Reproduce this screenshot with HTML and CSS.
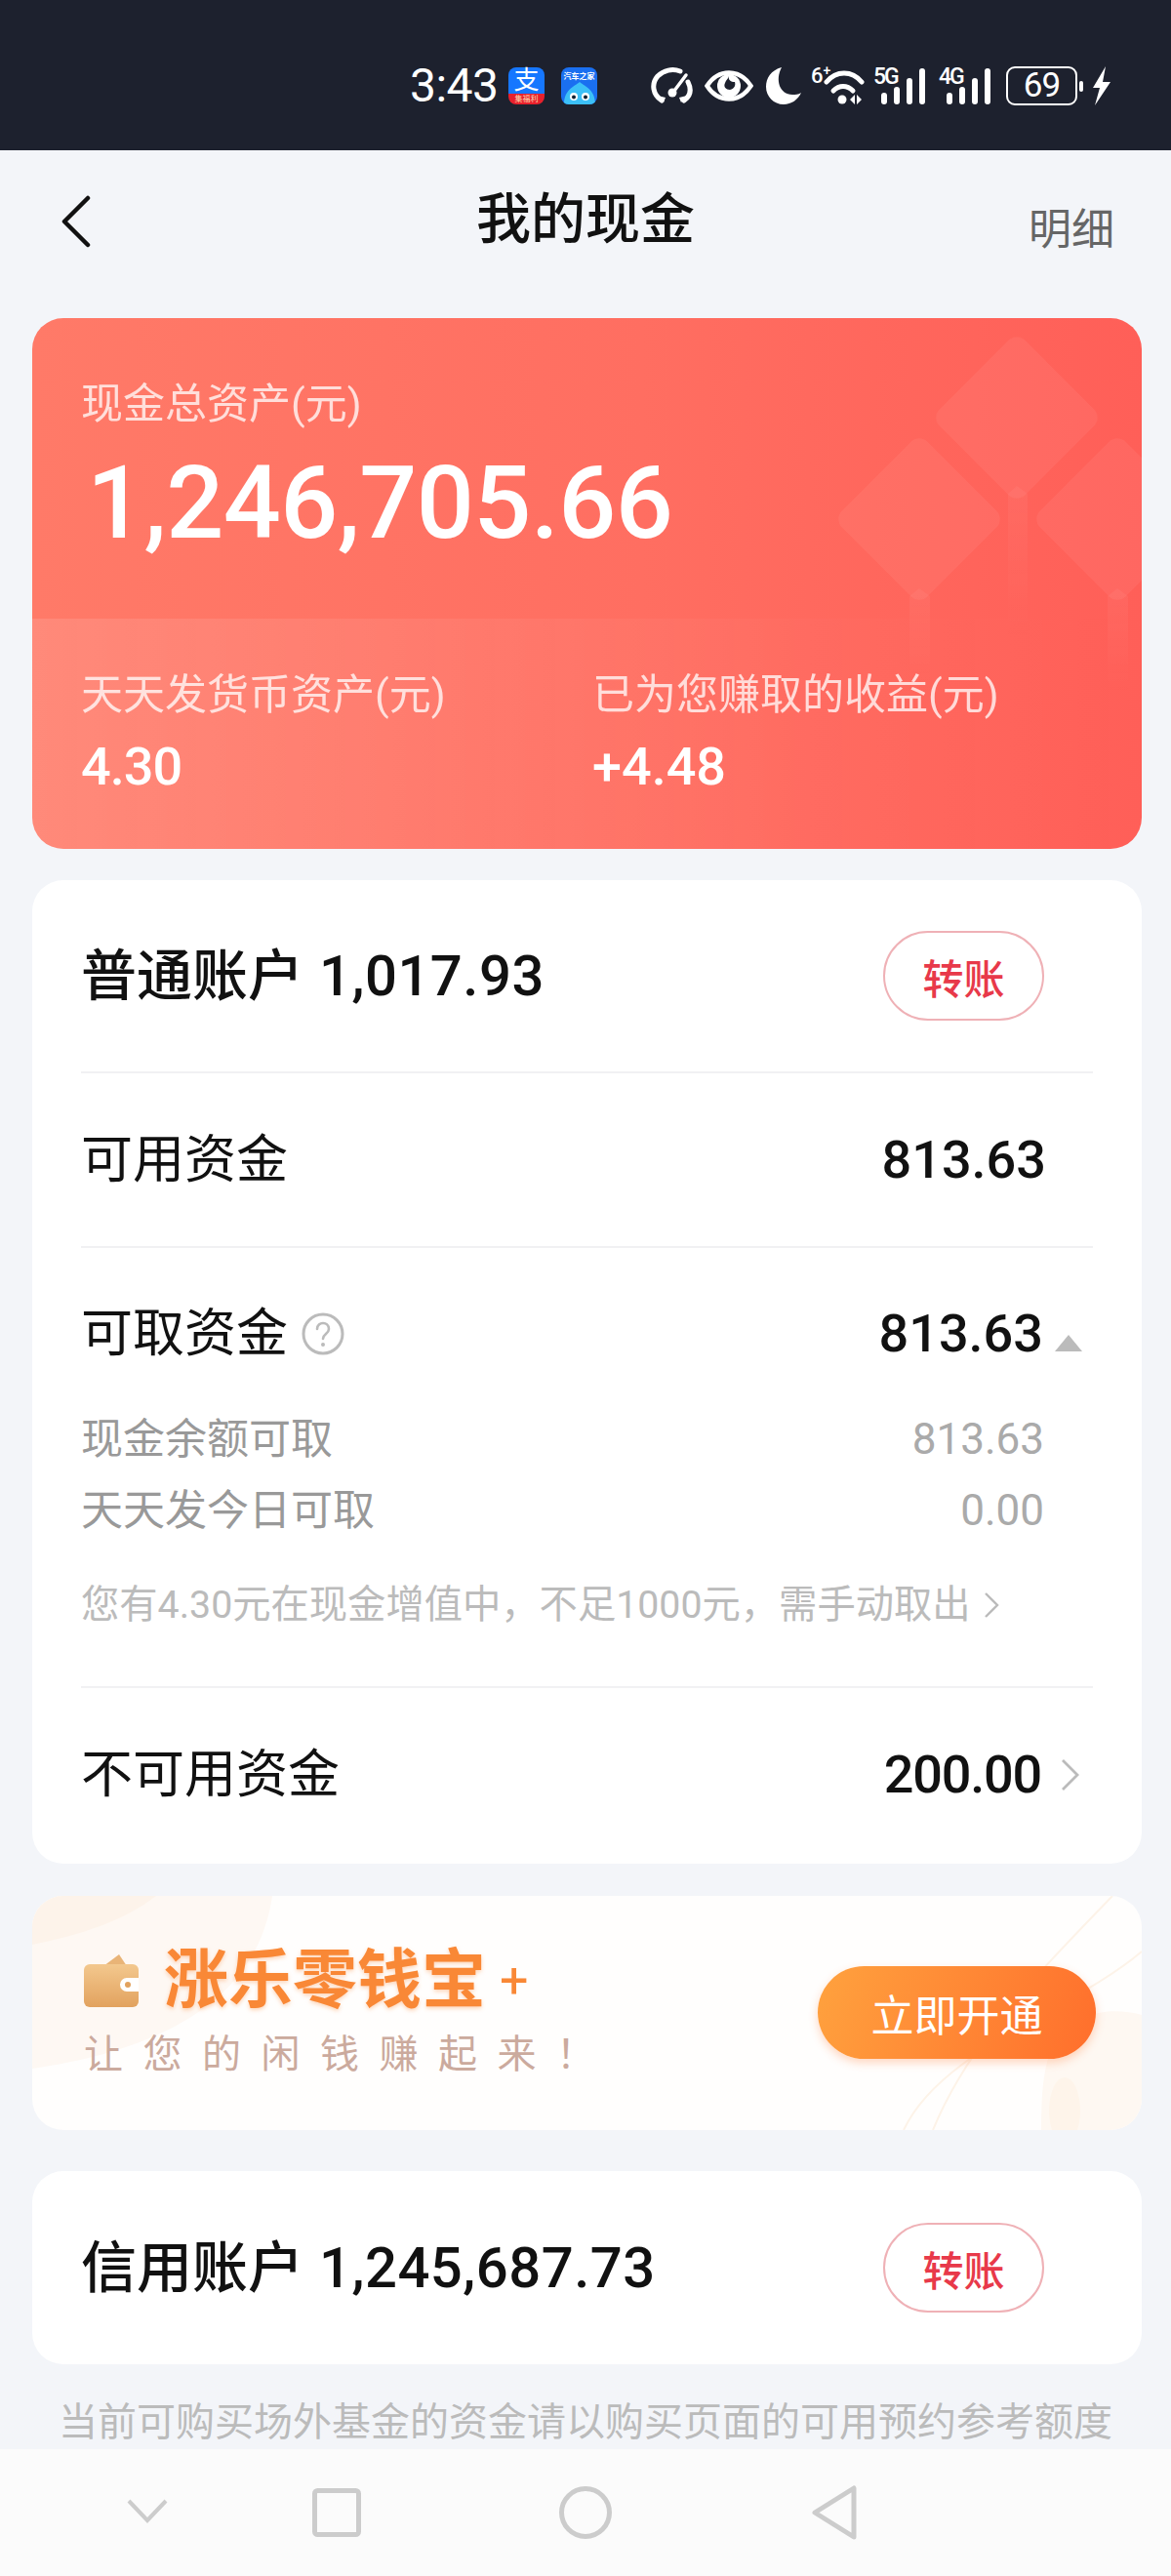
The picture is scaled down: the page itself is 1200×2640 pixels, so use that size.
FILE: index.html
```html
<!DOCTYPE html>
<html lang="zh-CN">
<head>
    <meta charset="UTF-8">
    <meta name="viewport" content="width=device-width, initial-scale=1.0">
    <title>我的现金</title>
    <link rel="stylesheet" href="styles.css">
</head>
<body>
    <div class="phone">
        <!-- system status bar -->
        <div class="statusbar">
            <span class="clock">3:43</span>
            <span class="app-icon app-alipay">
                <span class="alipay-mark">支</span>
                <span class="alipay-tag">集福利</span>
            </span>
            <span class="app-icon app-autohome">
                <span class="autohome-name">汽车之家</span>
                <svg class="autohome-drop" viewBox="0 0 38 24" width="38" height="24">
                    <path d="M19 1C13 6 3 9 3 24h32C35 9 25 6 19 1z" fill="#3cc0f7"/>
                    <circle cx="13" cy="16" r="4" fill="#fff"/>
                    <circle cx="25" cy="16" r="4" fill="#fff"/>
                    <circle cx="13" cy="16.500" r="2" fill="#123"/>
                    <circle cx="25" cy="16.500" r="2" fill="#123"/>
                </svg>
            </span>
            <span class="status-icons">
                <svg width="44" height="38" viewBox="0 0 44 38">
                    <path d="M11 34C2 28 0 17 7 9c6-6 15-8 23-5" fill="none" stroke="#fff" stroke-width="5" stroke-linecap="round"/>
                    <path d="M38 15c4 8 3 14-4 19" fill="none" stroke="#fff" stroke-width="5" stroke-linecap="round"/>
                    <path d="M7 29l6 7 2-5zM37 29l-6 7-2-5z" fill="#fff"/>
                    <path d="M36 8L24 24" stroke="#fff" stroke-width="3.500" stroke-linecap="round"/>
                    <circle cx="22" cy="26" r="4.500" fill="#fff"/>
                </svg>
                <svg class="icon-eye" width="50" height="32" viewBox="0 0 50 32">
                    <path d="M2.500 16C9 6 17 2.500 25 2.500S41 6 47.500 16C41 26 33 29.500 25 29.500S9 26 2.500 16z" fill="none" stroke="#fff" stroke-width="4.500"/>
                    <circle cx="25" cy="16" r="12" fill="#fff"/>
                    <path d="M25 6c-1 4 2 6 6 6 1 3 0 7-5 8-4 0-7-3-5-7 1-3 3-4 4-7z" fill="#1d212e"/>
                    <path d="M19 17c1 7 5 9 9 8-5 4-13 0-9-8z" fill="#fff"/>
                </svg>
                <svg class="icon-moon" width="36" height="38" viewBox="0 0 36 38">
                    <path d="M16 0C5 3 0 11 0 20c0 10 8 18 18 18 8 0 15-5 18-12-3 2-6 2-9 2C14 28 9 13 16 0z" fill="#fff"/>
                </svg>
                <span class="net net-wifi">
                    <span class="wifi-label">6<sup>+</sup></span>
                    <svg width="42" height="38" viewBox="0 0 42 38">
                        <path d="M3 15C13 3 29 3 39 15" fill="none" stroke="#fff" stroke-width="5" stroke-linecap="round"/>
                        <path d="M10 24c6-6 14-6 20 0" fill="none" stroke="#fff" stroke-width="5" stroke-linecap="round"/>
                        <circle cx="19" cy="33" r="4.500" fill="#fff"/>
                        <path d="M27 33l5-5v10zM34 28l5 5-5 5z" fill="#fff"/>
                    </svg>
                </span>
                <span class="net">
                    <span class="net-label">5G</span>
                    <span class="bars"><i class="bar-1"></i><i class="bar-2"></i><i class="bar-3"></i><i class="bar-4"></i></span>
                </span>
                <span class="net">
                    <span class="net-label">4G</span>
                    <span class="bars"><i class="bar-1"></i><i class="bar-2"></i><i class="bar-3"></i><i class="bar-4"></i></span>
                </span>
                <span class="battery">69</span>
                <span class="battery-cap"></span>
                <svg width="20" height="40" viewBox="0 0 20 40">
                    <path d="M14 0L1 22h7L3 40l16-24h-8z" fill="#fff"/>
                </svg>
            </span>
        </div>

        <!-- title bar -->
        <div class="topbar">
            <svg class="back" width="32" height="54" viewBox="0 0 32 54">
                <path d="M28 3L4 27l24 24" fill="none" stroke="#111" stroke-width="4.500" stroke-linecap="round" stroke-linejoin="round"/>
            </svg>
            <h1 class="title">我的现金</h1>
            <span class="detail-link">明细</span>
        </div>

        <div class="content">
            <!-- total assets -->
            <section class="hero">
                <svg class="hero-deco" width="1137" height="544" viewBox="0 0 1137 544">
                    <defs>
                        <linearGradient id="stemFade" x1="0" y1="0" x2="0" y2="1">
                            <stop offset="0" stop-color="#fff" stop-opacity="0.05"/>
                            <stop offset="1" stop-color="#fff" stop-opacity="0"/>
                        </linearGradient>
                    </defs>
                    <g fill="#fff" opacity="0.055">
                        <rect x="947" y="40" width="124" height="124" rx="12" transform="rotate(45 1009 102)"/>
                        <rect x="847" y="144" width="124" height="124" rx="12" transform="rotate(45 909 206)"/>
                        <rect x="1050" y="144" width="124" height="124" rx="12" transform="rotate(45 1112 206)"/>
                    </g>
                    <path d="M1000 180l9 -8 11 8v150h-20z" fill="url(#stemFade)"/>
                    <path d="M899 285l10-8 11 8v100h-21z" fill="url(#stemFade)"/>
                    <path d="M1102 285l10-8 11 8v100h-21z" fill="url(#stemFade)"/>
                </svg>
                <div class="hero-top">
                    <div class="hero-label">现金总资产(元)</div>
                    <div class="hero-total">1,246,705.66</div>
                </div>
                <div class="hero-bottom">
                    <div class="hero-col">
                        <div class="hero-label">天天发货币资产(元)</div>
                        <div class="hero-value">4.30</div>
                    </div>
                    <div class="hero-col hero-col-right">
                        <div class="hero-label">已为您赚取的收益(元)</div>
                        <div class="hero-value">+4.48</div>
                    </div>
                </div>
            </section>

            <!-- normal account -->
            <section class="card card-normal">
                <div class="account-head">
                    <div class="account-name">普通账户<span class="account-sum">1,017.93</span></div>
                    <button class="transfer">转账</button>
                </div>
                <div class="row row-usable">
                    <span class="row-name">可用资金</span>
                    <span class="row-num row-num-flush">813.63</span>
                </div>
                <div class="withdraw">
                    <div class="row row-withdraw">
                        <span class="row-name">可取资金
                            <svg class="help" width="44" height="44" viewBox="0 0 44 44">
                                <circle cx="22" cy="22" r="20" fill="none" stroke="#bbb" stroke-width="3"/>
                                <path d="M16 17c0-8 12-8 12 0 0 5-6 5-6 10" fill="none" stroke="#bbb" stroke-width="2.600" stroke-linecap="round"/>
                                <circle cx="22" cy="33" r="2" fill="#bbb"/>
                            </svg>
                        </span>
                        <span class="row-end">
                            <span class="row-num">813.63</span>
                            <i class="caret-up"></i>
                        </span>
                    </div>
                    <div class="sub-row">
                        <span>现金余额可取</span>
                        <span class="sub-num">813.63</span>
                    </div>
                    <div class="sub-row">
                        <span>天天发今日可取</span>
                        <span class="sub-num">0.00</span>
                    </div>
                    <div class="notice">
                        您有4.30元在现金增值中，不足1000元，需手动取出
                        <svg width="16" height="28" viewBox="0 0 16 28">
                            <path d="M2 2l12 12L2 26" fill="none" stroke="#bbb" stroke-width="2.400"/>
                        </svg>
                    </div>
                </div>
                <div class="row row-locked">
                    <span class="row-name">不可用资金</span>
                    <span class="row-end">
                        <span class="row-num row-num-tight">200.00</span>
                        <svg class="chevron" width="20" height="34" viewBox="0 0 20 34">
                            <path d="M2 2l15 15L2 32" fill="none" stroke="#bbb" stroke-width="2.800"/>
                        </svg>
                    </span>
                </div>
            </section>

            <!-- promo banner -->
            <section class="banner">
                <svg class="banner-bg" width="1137" height="240" viewBox="0 0 1137 240">
                    <path d="M0 0h246c-10 70-60 150-246 177z" fill="#fef8f3"/>
                    <path d="M0 0h127C95 25 50 40 0 50z" fill="#fdf3ea"/>
                    <path d="M1137 122c-30-8-62-4-84 22-16 20-19 50-19 96h103z" fill="#fef8f2"/>
                    <ellipse cx="1058" cy="220" rx="16" ry="34" fill="#fef4ea"/>
                    <path d="M1107 0C1030 80 960 150 923 240M1137 57c-70 60-205 100-244 183" fill="none" stroke="#fdf3e8" stroke-width="2"/>
                </svg>
                <div class="banner-text">
                    <div class="banner-title">
                        <svg class="wallet" width="56" height="54" viewBox="0 0 56 54">
                            <defs>
                                <linearGradient id="walletFill" x1="0" y1="0" x2="0" y2="1">
                                    <stop offset="0" stop-color="#f3c88e"/>
                                    <stop offset="1" stop-color="#e2a25e"/>
                                </linearGradient>
                            </defs>
                            <path d="M20 12L36 0l8 12z" fill="#e9b477"/>
                            <rect x="0" y="10" width="56" height="44" rx="6" fill="url(#walletFill)"/>
                            <path d="M56 24H44a5 5 0 0 0 0 14h12z" fill="#fff"/>
                            <circle cx="45" cy="31" r="3" fill="#e2a25e"/>
                        </svg>
                        <span class="banner-name">涨乐零钱宝</span>
                        <span class="banner-plus">+</span>
                    </div>
                    <div class="banner-sub">让您的闲钱赚起来！</div>
                </div>
                <button class="open-btn">立即开通</button>
            </section>

            <!-- credit account -->
            <section class="card card-credit">
                <div class="account-name">信用账户<span class="account-sum">1,245,687.73</span></div>
                <button class="transfer">转账</button>
            </section>

            <p class="footnote">当前可购买场外基金的资金请以购买页面的可用预约参考额度</p>
        </div>

        <!-- system navigation -->
        <nav class="navbar">
            <svg class="nav-down" width="44" height="26" viewBox="0 0 44 26">
                <path d="M3 3l19 20L41 3" fill="none" stroke="#ccc" stroke-width="4"/>
            </svg>
            <svg class="nav-square" width="50" height="50" viewBox="0 0 50 50">
                <rect x="2.500" y="2.500" width="45" height="45" rx="3" fill="none" stroke="#ccc" stroke-width="5"/>
            </svg>
            <svg class="nav-circle" width="54" height="54" viewBox="0 0 54 54">
                <circle cx="27" cy="27" r="24.500" fill="none" stroke="#ccc" stroke-width="5"/>
            </svg>
            <svg class="nav-back" width="46" height="56" viewBox="0 0 46 56">
                <path d="M43 3v50L3 28z" fill="none" stroke="#ccc" stroke-width="5" stroke-linejoin="round"/>
            </svg>
        </nav>
    </div>
</body>
</html>
```

FILE: styles.css
```css
* {
    margin: 0;
    padding: 0;
    box-sizing: border-box;
}

body {
    width: 1200px;
    height: 2640px;
    overflow: hidden;
    background: #f3f5f9;
    font-family: Roboto, "Noto Sans CJK SC", sans-serif;
}

.phone {
    display: flex;
    flex-direction: column;
    height: 2640px;
}

/* status bar */
.statusbar {
    display: flex;
    align-items: center;
    height: 154px;
    padding: 22px 0 0 420px;
    background: #1d212e;
    color: #fff;
}

.clock {
    width: 101px;
    font-size: 48px;
    line-height: 50px;
    letter-spacing: -0.5px;
}

.app-icon {
    display: flex;
    flex-direction: column;
    align-items: center;
    width: 37px;
    height: 38px;
    border-radius: 8px;
}

.app-alipay {
    margin-right: 17px;
    background: linear-gradient(#1677ff 0 70%, #e8202c 70%);
}

.alipay-mark {
    height: 27px;
    font-size: 26px;
    line-height: 27px;
}

.alipay-tag {
    height: 11px;
    font-size: 8px;
    line-height: 11px;
    color: #ffd9b0;
    white-space: nowrap;
}

.app-autohome {
    overflow: hidden;
    background: #1a6ff0;
}

.autohome-name {
    margin-top: 5px;
    font-size: 8px;
    line-height: 10px;
    font-weight: 700;
    white-space: nowrap;
}

.autohome-drop {
    flex: none;
    margin-top: -1px;
}

.status-icons {
    display: flex;
    align-items: center;
    margin-left: 55px;
}

.icon-eye {
    margin-left: 11px;
}

.icon-moon {
    margin-left: 13px;
}

.net {
    display: flex;
    align-items: flex-end;
    height: 38px;
}

.net-wifi {
    margin-left: 10px;
}

.wifi-label {
    align-self: flex-start;
    width: 13px;
    font-size: 22px;
    line-height: 18px;
    font-weight: 500;
    white-space: nowrap;
}

.wifi-label sup {
    font-size: 14px;
    line-height: 0;
}

.net-label {
    align-self: flex-start;
    width: 8px;
    font-size: 23px;
    line-height: 19px;
    letter-spacing: -2px;
    font-weight: 500;
    white-space: nowrap;
}

.net + .net {
    margin-left: 9px;
}

.net + .net + .net {
    margin-left: 14px;
}

.bars {
    display: flex;
    align-items: flex-end;
    gap: 7px;
    height: 38px;
}

.bars i {
    width: 6px;
    background: #fff;
    border-radius: 3px;
}

.bar-1 { height: 12px; }
.bar-2 { height: 18px; }
.bar-3 { height: 27px; }
.bar-4 { height: 37px; }

.battery {
    width: 73px;
    height: 40px;
    margin-left: 16px;
    border: 2.5px solid #fff;
    border-radius: 9px;
    font-size: 35px;
    line-height: 35px;
    letter-spacing: -1px;
    text-align: center;
}

.battery-cap {
    width: 4px;
    height: 11px;
    margin: 0 9px 0 2px;
    background: #fff;
    border-radius: 2px;
}

/* title bar */
.topbar {
    position: relative;
    display: flex;
    align-items: center;
    justify-content: center;
    height: 172px;
    padding-bottom: 31px;
}

.back {
    position: absolute;
    left: 62px;
    top: 46px;
}

.title {
    font-size: 56px;
    line-height: 70px;
    font-weight: 500;
    color: #111;
}

.detail-link {
    position: absolute;
    right: 58px;
    top: 57px;
    font-size: 44px;
    line-height: 50px;
    color: #666;
}

.content {
    flex: 1;
    padding: 0 30px 0 33px;
    overflow: hidden;
}

/* total assets card */
.hero {
    position: relative;
    height: 544px;
    border-radius: 32px;
    overflow: hidden;
    background: linear-gradient(90deg, #ff7a68, #ff6e61 55%, #ff5f58);
    color: #fff;
}

.hero-deco {
    position: absolute;
    top: 0;
    left: 0;
}

.hero-label {
    font-size: 43px;
    line-height: 56px;
    color: rgba(255, 255, 255, 0.76);
}

.hero-top {
    position: relative;
    height: 308px;
    padding: 60px 0 0 50px;
}

.hero-total {
    margin: 19px 0 0 6px;
    font-size: 104px;
    line-height: 110px;
    letter-spacing: -0.6px;
    font-weight: 500;
}

.hero-bottom {
    position: relative;
    display: flex;
    height: 236px;
    padding: 50px 0 0 50px;
    background: linear-gradient(90deg, rgba(255, 255, 255, 0.12), rgba(255, 255, 255, 0.02) 70%, rgba(255, 255, 255, 0));
}

.hero-col {
    width: 524px;
}

.hero-value {
    margin-top: 16px;
    font-size: 54px;
    line-height: 60px;
    letter-spacing: -1px;
    font-weight: 500;
}

.hero-col-right .hero-value {
    letter-spacing: 0;
}

/* white cards */
.card {
    background: #fff;
    border-radius: 32px;
}

.card-normal {
    height: 1008px;
    margin-top: 32px;
    padding: 0 50px;
}

.account-head {
    display: flex;
    align-items: center;
    justify-content: space-between;
    height: 198px;
    padding: 0 50px 0 0;
    border-bottom: 2px solid #f1f1f3;
}

.account-name {
    font-size: 57px;
    line-height: 70px;
    font-weight: 500;
    color: #111;
}

.account-sum {
    margin-left: 16px;
    font-size: 58px;
    letter-spacing: 0.5px;
}

.transfer {
    width: 165px;
    height: 92px;
    background: #fff;
    border: 2px solid #efb1b6;
    border-radius: 46px;
    color: #e8394a;
    font-family: inherit;
    font-size: 42px;
    font-weight: 500;
}

.row {
    display: flex;
    align-items: center;
    justify-content: space-between;
    color: #111;
}

.row-name {
    display: flex;
    align-items: center;
    font-size: 53px;
    line-height: 70px;
}

.row-num {
    font-size: 54px;
    line-height: 70px;
    font-weight: 500;
}

.row-num-flush {
    margin-right: 48px;
}

.row-num-tight {
    letter-spacing: -1.2px;
}

.row-usable {
    height: 179px;
    border-bottom: 2px solid #f1f1f3;
}

.row-end {
    display: flex;
    align-items: center;
}

.help {
    margin-left: 14px;
}

.withdraw {
    height: 451px;
    border-bottom: 2px solid #f1f1f3;
}

.row-withdraw {
    height: 176px;
    align-items: flex-start;
    padding-top: 53px;
    margin-bottom: -16px;
}

.row-withdraw .row-end {
    height: 70px;
}

.caret-up {
    width: 0;
    height: 0;
    margin: 18px 11px 0 12px;
    border-left: 14px solid transparent;
    border-right: 14px solid transparent;
    border-bottom: 17px solid #bbb;
}

.sub-row {
    display: flex;
    justify-content: space-between;
    height: 73px;
    padding-right: 50px;
    font-size: 43px;
    line-height: 73px;
    color: #999;
}

.sub-num {
    font-size: 44px;
    color: #aaa;
}

.notice {
    display: flex;
    align-items: center;
    gap: 13px;
    margin-top: 35px;
    font-size: 39.300px;
    line-height: 50px;
    color: #bbb;
    white-space: nowrap;
}

.row-locked {
    height: 177px;
}

.chevron {
    margin: 0 13px 0 20px;
}

/* promo banner */
.banner {
    position: relative;
    display: flex;
    justify-content: space-between;
    height: 240px;
    margin-top: 33px;
    padding: 57px 47px 0 53px;
    border-radius: 32px;
    overflow: hidden;
    background: #fffefd;
}

.banner-bg {
    position: absolute;
    top: 0;
    left: 0;
}

.banner-text,
.open-btn {
    position: relative;
}

.banner-title {
    display: flex;
    align-items: center;
    height: 60px;
}

.banner-name {
    margin-left: 26px;
    font-size: 66px;
    line-height: 60px;
    font-weight: 700;
    color: #f98836;
    text-shadow: 0 2px 4px rgba(249, 136, 54, 0.35);
}

.banner-plus {
    margin-left: 14px;
    font-size: 52px;
    line-height: 60px;
    color: #f98836;
}

.banner-sub {
    margin-top: 19px;
    font-size: 40px;
    line-height: 54px;
    letter-spacing: 20.5px;
    color: #cbaa9d;
    white-space: nowrap;
}

.open-btn {
    width: 285px;
    height: 95px;
    margin-top: 15px;
    border: none;
    border-radius: 48px;
    background: linear-gradient(110deg, #ffa23e, #ff6e2c);
    box-shadow: 0 4px 10px rgba(255, 120, 50, 0.3);
    color: #fff;
    font-family: inherit;
    font-size: 44px;
}

.card-credit {
    display: flex;
    align-items: center;
    justify-content: space-between;
    height: 198px;
    margin-top: 42px;
    padding: 0 100px 0 50px;
}

.footnote {
    margin-top: 34px;
    padding-left: 27px;
    font-size: 40px;
    line-height: 52px;
    color: #bbb;
    white-space: nowrap;
}

/* navigation bar */
.navbar {
    position: relative;
    flex: none;
    height: 130px;
    background: #fbfbfb;
}

.navbar svg {
    position: absolute;
}

.nav-down { left: 129px; top: 50px; }
.nav-square { left: 320px; top: 40px; }
.nav-circle { left: 573px; top: 38px; }
.nav-back { left: 832px; top: 37px; }
```
